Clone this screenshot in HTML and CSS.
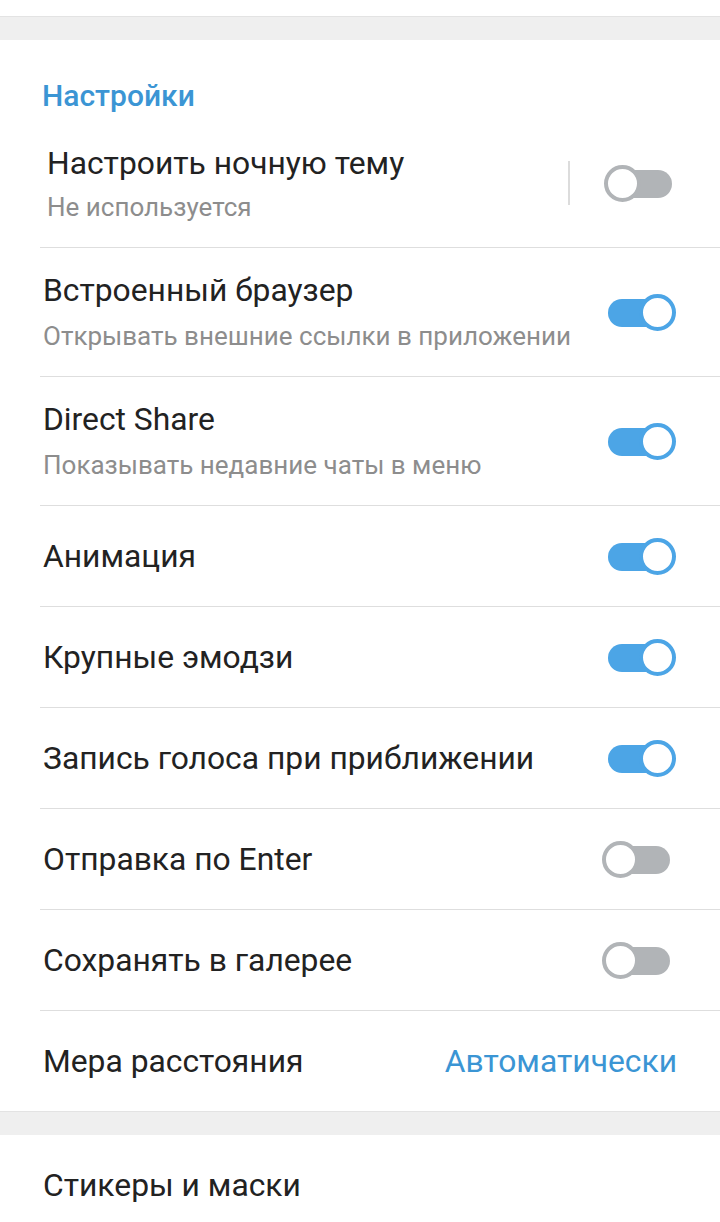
FILE: index.html
```html
<!DOCTYPE html>
<html lang="ru">
<head>
    <meta charset="UTF-8">
    <meta name="viewport" content="width=device-width, initial-scale=1.0">
    <title>Настройки</title>
    <link rel="stylesheet" href="styles.css">
</head>
<body>
    <div class="top-strip"></div>
    <div class="section-gap"></div>

    <div class="section">
        <div class="section-header">Настройки</div>

        <div class="row row-double row-theme">
            <div class="row-inner">
                <div class="row-text">
                    <div class="row-title">Настроить ночную тему</div>
                    <div class="row-sub">Не используется</div>
                </div>
                <div class="v-divider"></div>
                <div class="switch"><span class="track"></span><span class="knob"></span></div>
            </div>
        </div>

        <div class="row row-double">
            <div class="row-inner">
                <div class="row-text">
                    <div class="row-title">Встроенный браузер</div>
                    <div class="row-sub">Открывать внешние ссылки в приложении</div>
                </div>
                <div class="switch on"><span class="track"></span><span class="knob"></span></div>
            </div>
        </div>

        <div class="row row-double">
            <div class="row-inner">
                <div class="row-text">
                    <div class="row-title">Direct Share</div>
                    <div class="row-sub">Показывать недавние чаты в меню</div>
                </div>
                <div class="switch on"><span class="track"></span><span class="knob"></span></div>
            </div>
        </div>

        <div class="row">
            <div class="row-inner">
                <div class="row-title">Анимация</div>
                <div class="switch on"><span class="track"></span><span class="knob"></span></div>
            </div>
        </div>

        <div class="row">
            <div class="row-inner">
                <div class="row-title">Крупные эмодзи</div>
                <div class="switch on"><span class="track"></span><span class="knob"></span></div>
            </div>
        </div>

        <div class="row">
            <div class="row-inner">
                <div class="row-title">Запись голоса при приближении</div>
                <div class="switch on"><span class="track"></span><span class="knob"></span></div>
            </div>
        </div>

        <div class="row">
            <div class="row-inner">
                <div class="row-title">Отправка по Enter</div>
                <div class="switch"><span class="track"></span><span class="knob"></span></div>
            </div>
        </div>

        <div class="row">
            <div class="row-inner">
                <div class="row-title">Сохранять в галерее</div>
                <div class="switch"><span class="track"></span><span class="knob"></span></div>
            </div>
        </div>

        <div class="row row-last">
            <div class="row-inner">
                <div class="row-title">Мера расстояния</div>
                <div class="row-value">Автоматически</div>
            </div>
        </div>
    </div>

    <div class="section-gap"></div>

    <div class="section">
        <div class="row row-last">
            <div class="row-inner">
                <div class="row-title">Стикеры и маски</div>
            </div>
        </div>
    </div>
</body>
</html>
```

FILE: styles.css
```css
body {
    margin: 0;
    background-color: #fff;
    font-family: Roboto, "Noto Sans", sans-serif;
    color: #222;
    overflow: hidden;
}
.top-strip {
    height: 16px;
    background-color: #fff;
}
.section-gap {
    height: 23px;
    background-color: #efefef;
    border-top: 1px solid #e3e3e3;
}
.section {
    background-color: #fff;
}
.section-header {
    height: 79px;
    box-sizing: border-box;
    padding-left: 42px;
    padding-top: 38px;
    color: #3b95d4;
    font-size: 30px;
    font-weight: 500;
    line-height: 36px;
}
.row {
    padding-left: 40px;
}
.row-inner {
    display: flex;
    align-items: center;
    height: 101px;
    box-sizing: border-box;
    padding-left: 3px;
    padding-right: 44px;
    border-bottom: 1px solid #dedede;
}
.row-last .row-inner {
    height: 100px;
    border-bottom: none;
    padding-right: 43px;
}
.row-double .row-inner {
    height: 129px;
}
.row-text {
    flex: 1;
    margin-top: -2px;
}
.row-title {
    flex: 1;
    font-size: 31.8px;
    line-height: 38px;
    color: #222;
}
.row-sub {
    margin-top: 11px;
    font-size: 26px;
    line-height: 32px;
    color: #8d8d8d;
}
.row-theme .row-inner {
    padding-left: 7px;
    padding-right: 42px;
}
.row-theme .row-text {
    margin-top: 1px;
}
.row-theme .row-sub {
    margin-top: 9px;
}
.v-divider {
    width: 2px;
    height: 44px;
    background-color: #dcdcdc;
    margin-right: 34px;
}
.row-value {
    font-size: 31.8px;
    line-height: 38px;
    color: #3b95d4;
}

/* переключатели */
.switch {
    position: relative;
    width: 74px;
    height: 37px;
}
.track {
    position: absolute;
    left: 6px;
    top: 5px;
    width: 62px;
    height: 28px;
    border-radius: 14px;
    background-color: #b1b4b7;
}
.knob {
    position: absolute;
    left: 0;
    top: 0;
    width: 37px;
    height: 37px;
    box-sizing: border-box;
    border-radius: 50%;
    border: 4px solid #b1b4b7;
    background-color: #fff;
}
.switch.on .track {
    background-color: #4ca5e6;
}
.switch.on .knob {
    left: auto;
    right: 0;
    border-color: #4ca5e6;
}
```
